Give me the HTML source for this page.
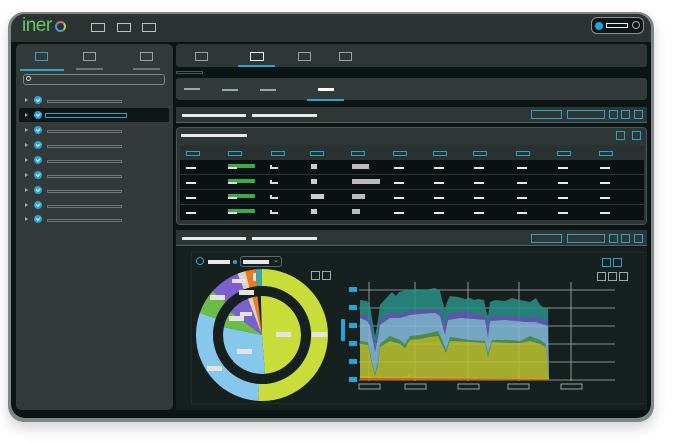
<!DOCTYPE html>
<html><head><style>
*{margin:0;padding:0;box-sizing:border-box}
body{width:700px;height:442px;background:#fff;position:relative;overflow:hidden;font-family:"Liberation Sans",sans-serif}
.a{position:absolute}
.ob{position:absolute;border:1.5px solid #b9c0c0}
.bb{position:absolute;border:1.5px solid #2ea3c8}
.gb{position:absolute;border:1px solid #6d7676}
.w{position:absolute;background:#e8eaea;height:3px}
.g{position:absolute;background:#8a9292;height:2px}
</style></head><body>
<div class="a" style="left:8px;top:12px;width:646px;height:410px;border-radius:16px;background:#7f8887;box-shadow:0 6px 14px rgba(0,0,0,.18)"></div>
<div class="a" style="left:11px;top:14px;width:640px;height:404px;border-radius:14px;background:#0c1516"></div>
<div class="a" style="left:11px;top:14px;width:640px;height:28px;border-radius:14px 14px 0 0;background:#2c3333"></div>
<div class="a" style="left:22px;top:15px;font-size:19px;letter-spacing:-0.5px;color:#6cc46a">iner</div>
<div class="a" style="left:55px;top:21px;width:11px;height:11px;border-radius:50%;border:2px solid #3e9fcf;border-top-color:#d06a7a;border-right-color:#c8c840"></div>
<div class="ob" style="left:91px;top:23px;width:14px;height:9px"></div>
<div class="ob" style="left:117px;top:23px;width:14px;height:9px"></div>
<div class="ob" style="left:142px;top:23px;width:14px;height:9px"></div>
<div class="a" style="left:591px;top:17px;width:53px;height:17px;border:1px solid #8a9292;border-radius:6px;background:#0e1718"></div>
<div class="a" style="left:595px;top:22px;width:8px;height:8px;border-radius:50%;background:#21a6dc"></div>
<div class="a" style="left:606px;top:23px;width:22px;height:5px;border:1.5px solid #eee"></div>
<div class="a" style="left:632px;top:21px;width:8px;height:8px;border:1px solid #aaa;border-radius:50%"></div>
<div class="a" style="left:16px;top:44px;width:157px;height:366px;border-radius:5px;background:#343a39"></div>
<div class="bb" style="left:35px;top:52px;width:13px;height:9px"></div>
<div class="ob" style="left:83px;top:52px;width:13px;height:9px;border-color:#9aa2a2"></div>
<div class="ob" style="left:140px;top:52px;width:13px;height:9px;border-color:#9aa2a2"></div>
<div class="a" style="left:20px;top:69px;width:44px;height:1.5px;background:#2ea3c8"></div>
<div class="g" style="left:76px;top:68px;width:27px;height:1.5px;background:#6d7676"></div>
<div class="g" style="left:133px;top:68px;width:27px;height:1.5px;background:#6d7676"></div>
<div class="a" style="left:23px;top:74px;width:142px;height:11px;border:1px solid #7b8585;border-radius:3px"></div>
<div class="a" style="left:26px;top:76px;width:5px;height:5px;border:1px solid #ddd;border-radius:50%"></div>
<div class="a" style="left:19px;top:108px;width:150px;height:14px;background:#0e1718;border-radius:2px"></div>
<div id="tree"></div>
<div class="a" style="left:176px;top:44px;width:471px;height:23px;border-radius:3px;background:#2f3636"></div>
<div class="ob" style="left:195px;top:52px;width:13px;height:9px;border-color:#9aa2a2"></div>
<div class="ob" style="left:250px;top:52px;width:14px;height:9px;border-color:#f0f0f0"></div>
<div class="ob" style="left:298px;top:52px;width:13px;height:9px;border-color:#9aa2a2"></div>
<div class="ob" style="left:339px;top:52px;width:13px;height:9px;border-color:#9aa2a2"></div>
<div class="a" style="left:238px;top:65px;width:37px;height:1.5px;background:#2ea3c8"></div>
<div class="a" style="left:176px;top:71px;width:27px;height:3px;border:1px solid #4a5252"></div>
<div class="a" style="left:176px;top:78px;width:471px;height:22px;border-radius:3px;background:#333a3a"></div>
<div class="g" style="left:184px;top:88px;width:16px;height:2px;background:#9aa"></div>
<div class="g" style="left:222px;top:89px;width:16px;height:2px;background:#9aa"></div>
<div class="g" style="left:260px;top:89px;width:16px;height:2px;background:#9aa"></div>
<div class="w" style="left:318px;top:88px;width:16px;height:3px;background:#fff"></div>
<div class="a" style="left:307px;top:99px;width:37px;height:1.5px;background:#2ea3c8"></div>
<div class="a" style="left:176px;top:107px;width:471px;height:15px;background:#2f3636"></div>
<div class="a" style="left:176px;top:122px;width:471px;height:1px;background:#5a6464"></div>
<div class="w" style="left:182px;top:114px;width:64px"></div>
<div class="w" style="left:252px;top:114px;width:65px"></div>
<div class="bb" style="left:531px;top:110px;width:31px;height:9px"></div>
<div class="bb" style="left:567px;top:110px;width:38px;height:9px"></div>
<div class="bb" style="left:609px;top:110px;width:9px;height:9px"></div>
<div class="bb" style="left:621px;top:110px;width:9px;height:9px"></div>
<div class="bb" style="left:634px;top:110px;width:9px;height:9px"></div>
<div class="a" style="left:176px;top:127px;width:471px;height:98px;border:1px solid #4a5454;border-radius:4px;background:#2f3636"></div>
<div class="w" style="left:181px;top:134px;width:66px"></div>
<div class="bb" style="left:616px;top:131px;width:9px;height:9px"></div>
<div class="bb" style="left:632px;top:131px;width:9px;height:9px"></div>
<div class="a" style="left:180px;top:145px;width:464px;height:15px;background:#2a3131"></div>
<div class="a" style="left:180px;top:160px;width:464px;height:60px;background:#091112"></div>
<div id="tbl"></div>
<div class="a" style="left:176px;top:230px;width:471px;height:15px;background:#2f3636"></div>
<div class="a" style="left:176px;top:245px;width:471px;height:1px;background:#5a6464"></div>
<div class="w" style="left:182px;top:237px;width:64px"></div>
<div class="w" style="left:252px;top:237px;width:65px"></div>
<div class="bb" style="left:531px;top:234px;width:31px;height:9px"></div>
<div class="bb" style="left:567px;top:234px;width:38px;height:9px"></div>
<div class="bb" style="left:609px;top:234px;width:9px;height:9px"></div>
<div class="bb" style="left:621px;top:234px;width:9px;height:9px"></div>
<div class="bb" style="left:634px;top:234px;width:9px;height:9px"></div>
<div class="a" style="left:176px;top:247px;width:471px;height:163px;background:#16201f"></div>
<div class="a" style="left:191px;top:252px;width:453px;height:152px;border:1px solid #1f2c2b"></div>
<div class="a" style="left:196px;top:257px;width:8px;height:8px;border:1px solid #2ea3c8;border-radius:50%"></div>
<div class="w" style="left:208px;top:260px;width:22px;height:4px"></div>
<div class="a" style="left:233px;top:260px;width:4px;height:4px;border-radius:50%;background:#2ea3c8"></div>
<div class="a" style="left:240px;top:256px;width:42px;height:11px;border:1px solid #5e6868;border-radius:3px"></div>
<div class="w" style="left:243px;top:260px;width:26px;height:4px"></div>
<div class="a" style="left:273px;top:256px;font-size:7px;color:#aaa">⌄</div>
<div class="gb" style="left:311px;top:271px;width:9px;height:9px;border-color:#9aa"></div>
<div class="gb" style="left:322px;top:271px;width:9px;height:9px;border-color:#9aa"></div>
<div class="bb" style="left:602px;top:258px;width:9px;height:9px"></div>
<div class="bb" style="left:613px;top:258px;width:9px;height:9px"></div>
<div class="gb" style="left:597px;top:272px;width:9px;height:9px;border-color:#9aa"></div>
<div class="gb" style="left:608px;top:272px;width:9px;height:9px;border-color:#9aa"></div>
<div class="gb" style="left:619px;top:272px;width:9px;height:9px;border-color:#9aa"></div>
<svg class="a" style="left:0;top:0" width="700" height="442">
<g transform="rotate(-90 262 335)">
<circle cx="262" cy="335" r="57.5" fill="none" stroke="#c8dc3a" stroke-width="17" pathLength="100" stroke-dasharray="51 49"/>
<circle cx="262" cy="335" r="57.5" fill="none" stroke="#86c8ec" stroke-width="17" pathLength="100" stroke-dasharray="0 51 29.5 19.5"/>
<circle cx="262" cy="335" r="57.5" fill="none" stroke="#6cbc48" stroke-width="17" pathLength="100" stroke-dasharray="0 80.5 6.2 13.3"/>
<circle cx="262" cy="335" r="57.5" fill="none" stroke="#7d5fd0" stroke-width="17" pathLength="100" stroke-dasharray="0 86.7 7.3 6"/>
<circle cx="262" cy="335" r="57.5" fill="none" stroke="#d9d4c8" stroke-width="17" pathLength="100" stroke-dasharray="0 94 2 4"/>
<circle cx="262" cy="335" r="57.5" fill="none" stroke="#f07a1a" stroke-width="17" pathLength="100" stroke-dasharray="0 96 2.5 1.5"/>
<circle cx="262" cy="335" r="57.5" fill="none" stroke="#3aa6b0" stroke-width="17" pathLength="100" stroke-dasharray="0 98.5 1.5 0"/>
<circle cx="262" cy="335" r="19.5" fill="none" stroke="#c8dc3a" stroke-width="39" pathLength="100" stroke-dasharray="49 51"/>
<circle cx="262" cy="335" r="19.5" fill="none" stroke="#86c8ec" stroke-width="39" pathLength="100" stroke-dasharray="0 49 29.6 21.4"/>
<circle cx="262" cy="335" r="19.5" fill="none" stroke="#6cbc48" stroke-width="39" pathLength="100" stroke-dasharray="0 78.6 7 14.4"/>
<circle cx="262" cy="335" r="19.5" fill="none" stroke="#7d5fd0" stroke-width="39" pathLength="100" stroke-dasharray="0 85.6 9 5.4"/>
<circle cx="262" cy="335" r="19.5" fill="none" stroke="#d9d4c8" stroke-width="39" pathLength="100" stroke-dasharray="0 94.6 2 3.4"/>
<circle cx="262" cy="335" r="19.5" fill="none" stroke="#f07a1a" stroke-width="39" pathLength="100" stroke-dasharray="0 96.6 2 1.4"/>
</g>
<circle cx="262" cy="335" r="44" fill="none" stroke="#16201f" stroke-width="10"/>
<g fill="#e4e4e4">
<rect x="312" y="332" width="15" height="5"/><rect x="276" y="332" width="15" height="5"/>
<rect x="207" y="366" width="15" height="5"/><rect x="237" y="349" width="15" height="5"/>
<rect x="210" y="295" width="15" height="5"/><rect x="239" y="290" width="15" height="5"/>
<rect x="229" y="316" width="15" height="5"/><rect x="240" y="312" width="12" height="4"/>
<rect x="232" y="279" width="14" height="4"/><rect x="253" y="273" width="3" height="8"/>
</g>
<g stroke="#c8cece" stroke-width="0.8" opacity=".85">
<line x1="359" y1="290" x2="615" y2="290"/><line x1="359" y1="308" x2="615" y2="308"/>
<line x1="359" y1="326" x2="615" y2="326"/><line x1="359" y1="344" x2="615" y2="344"/>
<line x1="359" y1="362" x2="615" y2="362"/><line x1="359" y1="380" x2="615" y2="380"/>
<line x1="369" y1="282" x2="369" y2="381"/><line x1="415" y1="282" x2="415" y2="381"/>
<line x1="468" y1="282" x2="468" y2="381"/><line x1="519" y1="282" x2="519" y2="381"/>
<line x1="571" y1="282" x2="571" y2="381"/>
</g>
<g opacity=".88">
<polygon fill="#2a8e84" points="360,380 360,300 367,301 370,306 372,318 375,336 378,320 380,305 388,296 392,292 396,296 399,292 408,290 415,289 425,290 435,288 440,291 442,300 445,310 447,302 450,296 458,297 465,299 470,298 474,300 478,299 484,300 486,310 488,316 490,302 495,300 505,301 512,298 520,300 530,302 536,298 540,305 546,309 548,308 549,380"/>
<polygon fill="#6a5cc0" points="360,380 360,314 367,316 370,320 372,330 375,346 378,334 380,320 390,313 400,314 410,311 420,310 435,309 440,311 445,324 448,314 460,312 475,314 485,315 488,326 490,316 505,316 515,316 525,318 535,317 545,320 548,321 549,380"/>
<polygon fill="#84b8d8" points="360,380 360,318 367,321 370,326 372,336 375,352 378,338 380,325 390,318 400,318 410,315 420,314 435,313 440,316 445,335 448,320 460,318 475,319 485,320 488,338 490,321 505,320 515,321 525,322 535,322 545,325 548,326 549,380"/>
<polygon fill="#4f9a52" points="360,380 360,341 368,342 372,362 375,374 378,362 380,344 390,336 400,340 405,344 410,336 420,335 430,333 438,331 442,340 446,350 450,337 470,340 485,341 488,354 492,340 510,340 520,341 530,336 540,340 546,344 549,380"/>
<polygon fill="#b8c032" points="360,380 360,344 368,345 372,364 375,376 378,365 380,347 390,341 400,344 405,348 410,340 420,339 430,337 438,336 442,345 446,353 450,341 470,342 485,343 488,357 492,342 510,343 520,343 530,341 540,344 546,347 549,380"/>
<polygon fill="#e0c020" points="360,380 360,376 400,377 410,375 412,377 450,377 500,378 549,378 549,380"/>
<polygon fill="#e06a10" points="360,380 360,378 549,379 549,380"/>
</g>
<g fill="#22a8d8">
<rect x="349" y="287" width="8" height="5"/><rect x="349" y="305" width="8" height="5"/>
<rect x="349" y="323" width="8" height="5"/><rect x="349" y="341" width="8" height="5"/>
<rect x="349" y="359" width="8" height="5"/><rect x="349" y="377" width="8" height="5"/>
<rect x="341" y="319" width="4" height="22" rx="1"/>
</g>
<g fill="none" stroke="#9aa2a2" stroke-width="1">
<rect x="359" y="384" width="21" height="5"/><rect x="405" y="384" width="21" height="5"/>
<rect x="458" y="384" width="21" height="5"/><rect x="508" y="384" width="21" height="5"/>
<rect x="561" y="384" width="21" height="5"/>
</g>
</svg>
<div class="a" style="left:0;top:0">
<script>
var h='';var ys=[100,115,130,145,160,175,190,205,219];
ys.forEach(function(y,i){h+='<div class="a" style="left:25px;top:'+(y-2)+'px;width:0;height:0;border-left:3px solid #aaa;border-top:2px solid transparent;border-bottom:2px solid transparent"></div>';
h+='<div class="a" style="left:34px;top:'+(y-4)+'px;width:8px;height:8px;border-radius:50%;background:#2ea3d8"></div>';
h+='<div class="a" style="left:36px;top:'+(y-2)+'px;width:4px;height:2.5px;border-left:1.2px solid #fff;border-bottom:1.2px solid #fff;transform:rotate(-45deg)"></div>';
if(i==1)h+='<div class="a" style="left:45px;top:'+(y-2)+'px;width:82px;height:5px;border:1px solid #2ea3c8"></div>';
else h+='<div class="a" style="left:47px;top:'+(y)+'px;width:75px;height:3px;border:1px solid #6d7676"></div>';});
document.getElementById('tree').innerHTML=h;
var t='';var cx=[186,228,271,310,351,393,433,473,516,557,599];
cx.forEach(function(x){t+='<div class="bb" style="left:'+x+'px;top:151px;width:14px;height:5px"></div>';});
var rows=[167,182,197,212];
rows.forEach(function(y,r){
t+='<div class="w" style="left:186px;top:'+y+'px;width:10px;height:2px"></div>';
t+='<div class="a" style="left:228px;top:'+(y-3)+'px;width:27px;height:4px;background:#3daa48"></div><div class="w" style="left:228px;top:'+y+'px;width:9px;height:2px;background:#ddd"></div>';
t+='<div class="w" style="left:270px;top:'+(y-2)+'px;width:2px;height:4px;background:#ddd"></div><div class="w" style="left:270px;top:'+y+'px;width:8px;height:2px;background:#ddd"></div>';
var w4=[6,6,13,6][r];t+='<div class="a" style="left:311px;top:'+(y-3)+'px;width:'+w4+'px;height:5px;background:#ccc"></div>';
var w5=[17,28,13,8][r];t+='<div class="a" style="left:352px;top:'+(y-3)+'px;width:'+w5+'px;height:5px;background:#bbb"></div>';
for(var k=5;k<11;k++)t+='<div class="w" style="left:'+(cx[k]+1)+'px;top:'+y+'px;width:10px;height:2px"></div>';
if(r<3)t+='<div class="a" style="left:180px;top:'+(y+7)+'px;width:464px;height:1px;background:#2a3434"></div>';});
document.getElementById('tbl').innerHTML=t;
</script>
</div>
</body></html>
